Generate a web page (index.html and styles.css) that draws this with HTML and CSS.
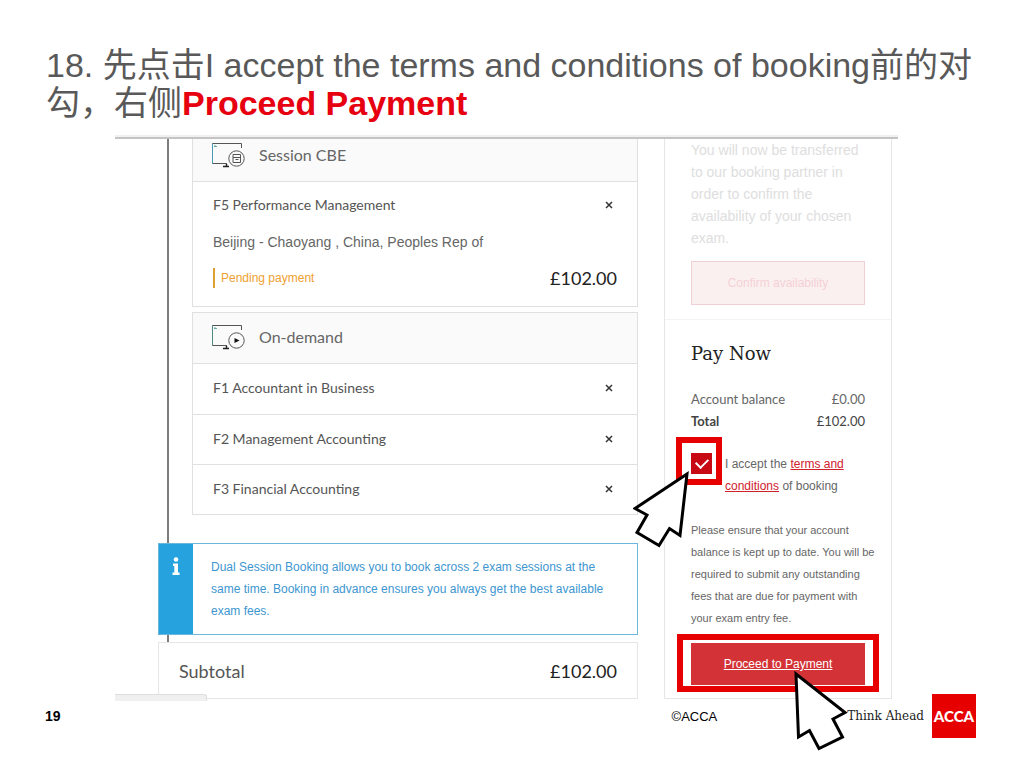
FILE: index.html
```html
<!DOCTYPE html>
<html lang="zh">
<head>
<meta charset="utf-8">
<title>Proceed Payment</title>
<meta name="viewport" content="width=device-width, initial-scale=1">
<link rel="stylesheet" href="styles.css">
</head>
<body>
<article class="slide">
  <h1 class="slide-title">18. 先点击I accept the terms and conditions of booking前的对勾，右侧<strong>Proceed Payment</strong></h1>

  <div class="capture">
    <main class="booking">
      <section class="card card-cut">
        <header class="card-head">
          <svg class="card-icon" viewBox="0 0 34 26" fill="none" stroke="#555" stroke-width="1" aria-hidden="true">
            <path d="M30.5 6V1.500H1.500V21.500H16"/>
            <path d="M1.500 1.500V21.500" stroke="#4a9bb5"/>
            <path d="M3 4.500H6M4 3V5" stroke="#6aa"/>
            <path d="M15.500 22V24M12 24.500H18" stroke="#222" stroke-width="1.500"/>
            <circle cx="25.500" cy="16.500" r="7.700" fill="#fafafa"/>
            <path d="M22 12.500H29.500V20.500H22ZM22 15.500H29.500M24.500 17.500H27.500"/>
          </svg>
          <h2 class="card-title">Session CBE</h2>
        </header>
        <div class="exam">
          <div class="exam-row">
            <h3 class="exam-name">F5 Performance Management</h3>
            <button class="remove" type="button" aria-label="Remove F5 Performance Management"><svg viewBox="0 0 8 8" aria-hidden="true"><path d="M1 1L7 7M7 1L1 7"/></svg></button>
          </div>
          <p class="exam-place">Beijing - Chaoyang , China, Peoples Rep of</p>
          <div class="exam-row exam-pay">
            <span class="status">Pending payment</span>
            <span class="price">£102.00</span>
          </div>
        </div>
      </section>

      <section class="card">
        <header class="card-head">
          <svg class="card-icon" viewBox="0 0 34 26" fill="none" stroke="#555" stroke-width="1" aria-hidden="true">
            <path d="M30.500 6V1.500H1.500V21.500H16"/>
            <path d="M1.500 1.500V21.500" stroke="#4f8a80"/>
            <path d="M3 4.500H6M4 3V5" stroke="#6aa"/>
            <path d="M15.500 22V24M12 24.500H18" stroke="#222" stroke-width="1.500"/>
            <circle cx="25.500" cy="16.500" r="7.700" fill="#fafafa"/>
            <path d="M23.500 14L28.500 16.500L23.500 19Z" fill="#111" stroke="none"/>
          </svg>
          <h2 class="card-title">On-demand</h2>
        </header>
        <ul class="exam-list">
          <li class="exam-line"><span class="exam-name">F1 Accountant in Business</span><button class="remove" type="button" aria-label="Remove F1 Accountant in Business"><svg viewBox="0 0 8 8" aria-hidden="true"><path d="M1 1L7 7M7 1L1 7"/></svg></button></li>
          <li class="exam-line"><span class="exam-name">F2 Management Accounting</span><button class="remove" type="button" aria-label="Remove F2 Management Accounting"><svg viewBox="0 0 8 8" aria-hidden="true"><path d="M1 1L7 7M7 1L1 7"/></svg></button></li>
          <li class="exam-line"><span class="exam-name">F3 Financial Accounting</span><button class="remove" type="button" aria-label="Remove F3 Financial Accounting"><svg viewBox="0 0 8 8" aria-hidden="true"><path d="M1 1L7 7M7 1L1 7"/></svg></button></li>
        </ul>
      </section>

      <aside class="notice">
        <span class="notice-badge">
          <svg class="notice-icon" viewBox="0 0 8 18" fill="#fff" aria-hidden="true"><circle cx="4" cy="2.500" r="2.300"/><path d="M1 6.500H6V15.500H7.500V18H0.500V15.500H2.300V9H1Z"/></svg>
        </span>
        <p class="notice-text">Dual Session Booking allows you to book across 2 exam sessions at the same time. Booking in advance ensures you always get the best available exam fees.</p>
      </aside>

      <div class="subtotal">
        <span class="subtotal-label">Subtotal</span>
        <span class="price">£102.00</span>
      </div>
    </main>

    <aside class="checkout">
      <section class="availability">
        <p class="availability-text">You will now be transferred to our booking partner in order to confirm the availability of your chosen exam.</p>
        <button class="confirm" type="button" disabled>Confirm availability</button>
      </section>
      <section class="pay">
        <h2 class="pay-title">Pay Now</h2>
        <dl class="totals">
          <div class="total-row"><dt>Account balance</dt><dd>£0.00</dd></div>
          <div class="total-row total-due"><dt>Total</dt><dd>£102.00</dd></div>
        </dl>
        <div class="accept">
          <input class="accept-box" id="accept" type="checkbox" checked>
          <label class="accept-label" for="accept">I accept the <a href="#terms">terms and conditions</a> of booking</label>
          <span class="mark mark-accept"></span>
          <svg class="cursor cursor-accept" viewBox="0 0 58 78" aria-hidden="true"><path d="M54 4L2 38.500L14 45L4 62.500L26 75.500L36.500 58.500L47 65.500Z"/></svg>
        </div>
        <p class="pay-note">Please ensure that your account balance is kept up to date. You will be required to submit any outstanding fees that are due for payment with your exam entry fee.</p>
        <div class="proceed-wrap">
          <a class="proceed" href="#payment">Proceed to Payment</a>
          <span class="mark mark-proceed"></span>
          <svg class="cursor cursor-proceed" viewBox="0 0 56 82" aria-hidden="true"><path d="M3 4L52 42.500L40 49L49.500 67L26 78.500L16.500 60.500L5.500 67Z"/></svg>
        </div>
      </section>
    </aside>
    <span class="status-tab"></span>
  </div>

  <footer class="slide-foot">
    <span class="page-number">19</span>
    <span class="copyright">©ACCA</span>
    <span class="tagline">Think Ahead</span>
    <span class="logo">ACCA</span>
  </footer>
</article>
</body>
</html>
```
FILE: styles.css
```css
* { box-sizing: border-box; }

body {
  margin: 0;
  background: #fff;
  color: #666;
  font-family: "Liberation Sans", Arial, "Noto Sans CJK SC", sans-serif;
}

h1, h2, h3, p, ul, dl, dd { margin: 0; padding: 0; font-weight: 400; }
ul { list-style: none; }

.slide { padding: 46px 0 28px; }

.slide-title {
  padding: 0 40px 0 46px;
  margin-bottom: 13px;
  color: #595959;
  font-size: 34px;
  line-height: 38px;
}
.slide-title strong { color: #e60010; font-weight: 700; }

/* Booking page */
.capture {
  position: relative;
  display: grid;
  grid-template-columns: minmax(0, 1fr) 228px;
  column-gap: 26px;
  margin: 0 117px 0 115px;
  padding: 0 6px 2px 0;
  border-top: 4px solid #f0f0f0;
}
.capture::before {
  content: "";
  position: absolute;
  top: -2px;
  left: 0;
  right: 0;
  height: 2px;
  background: #c4c4c4;
}

.booking { position: relative; padding-left: 43px; }
.booking::before {
  content: "";
  position: absolute;
  top: 0;
  bottom: 57px;
  left: 52px;
  width: 2px;
  background: #7c7c7c;
}

.card {
  margin: 0 0 5px 34px;
  border: 1px solid #e0e0e0;
}
.card-cut { border-top: 0; }
.card-head {
  display: flex;
  align-items: center;
  gap: 14px;
  height: 51px;
  padding: 0 0 2px 18px;
  background: #fafafa;
  border-bottom: 1px solid #e0e0e0;
}
.card-cut .card-head { height: 43px; padding-bottom: 10px; }
.card-icon { width: 34px; height: 26px; }
.card-title { font-family: Lato, sans-serif; font-size: 16px; line-height: 22px; }

.exam { padding: 12px 20px 15px; }
.exam-row { display: flex; align-items: center; justify-content: space-between; }
.exam-pay { align-items: flex-start; }
.exam-name { color: #555; font-family: Lato, sans-serif; font-size: 14px; line-height: 22px; }
.exam-place { margin: 15px 0 12px; font-size: 14px; line-height: 22px; }
.status {
  margin-top: 3px;
  padding-left: 6px;
  border-left: 2px solid #e0a030;
  color: #f0a030;
  font-size: 12px;
  line-height: 20px;
}
.price { color: #222; font-family: Lato, "Noto Sans", sans-serif; font-size: 18px; line-height: 26px; }

.remove {
  display: flex;
  padding: 4px;
  border: 0;
  background: none;
}
.remove svg { width: 8px; height: 8px; fill: none; stroke: #333; stroke-width: 1.5; }

.exam-line {
  display: flex;
  align-items: center;
  justify-content: space-between;
  height: 50px;
  padding: 0 20px 2px;
}
.exam-line + .exam-line { border-top: 1px solid #e0e0e0; }

.notice {
  position: relative;
  display: flex;
  margin-top: 28px;
  border: 1px solid #6ab6dd;
  background: #fff;
}
.notice-badge {
  display: flex;
  justify-content: center;
  flex: 0 0 34px;
  padding-top: 13px;
  background: #26a3df;
}
.notice-icon { width: 8px; height: 18px; }
.notice-text { padding: 12px 18px; color: #3d96d0; font-size: 12px; line-height: 22px; }

.subtotal {
  display: flex;
  align-items: center;
  justify-content: space-between;
  height: 57px;
  margin-top: 7px;
  padding: 0 20px;
  border: 1px solid #e6e6e6;
}
.subtotal-label { color: #555; font-family: Lato, sans-serif; font-size: 18px; }

/* Payment panel */
.checkout { border: 1px solid #e6e6e6; border-top: 0; }
.availability { padding: 0 26px 14px; border-bottom: 1px solid #f4f4f4; }
.availability-text { color: #dedede; font-size: 14px; line-height: 22px; }
.confirm {
  display: block;
  width: 100%;
  height: 44px;
  margin-top: 12px;
  border: 1px solid #f0d0d4;
  background: #faf0f0;
  color: #f5d0d6;
  font: 12px "Liberation Sans", Arial, sans-serif;
}
.pay { padding: 20px 26px 13px; }
.pay-title { color: #222; font-family: "DejaVu Serif", serif; font-size: 18px; line-height: 28px; }
.totals { margin-top: 20px; font-family: Lato, sans-serif; font-size: 13px; line-height: 22px; }
.total-row { display: flex; justify-content: space-between; }
.total-due { color: #444; font-weight: 700; }

.accept {
  position: relative;
  display: flex;
  align-items: flex-start;
  gap: 13px;
  margin-top: 21px;
}
.accept-box {
  appearance: none;
  display: grid;
  place-items: center;
  flex: 0 0 21px;
  height: 21px;
  margin: 0;
  background: #c80a14;
}
.accept-box:checked::before {
  content: "";
  width: 10px;
  height: 6px;
  margin-bottom: 3px;
  border: solid #fff;
  border-width: 0 0 2px 2px;
  transform: rotate(-45deg);
}
.accept-label { font-size: 12px; line-height: 22px; }
.accept-label a { color: #d0202c; }

.pay-note { margin: 22px -12px 0 0; font-size: 11px; line-height: 22px; }

.proceed-wrap { position: relative; margin-top: 14px; }
.proceed {
  display: block;
  background: #d33236;
  color: #fff;
  font-size: 12px;
  line-height: 42px;
  text-align: center;
}

/* Annotations over the page */
.mark { position: absolute; border: 6px solid #e60000; pointer-events: none; }
.mark-accept { top: -16px; left: -15px; width: 46px; height: 48px; }
.mark-proceed { inset: -9px -14px -7px; }
.cursor {
  position: absolute;
  z-index: 1;
  fill: #fff;
  stroke: #000;
  stroke-width: 3;
  pointer-events: none;
}
.cursor-accept { top: 17px; left: -58px; width: 58px; height: 78px; }
.cursor-proceed { top: 27px; left: 102px; width: 56px; height: 82px; }

.status-tab {
  position: absolute;
  bottom: 0;
  left: 0;
  width: 92px;
  height: 7px;
  border: 1px solid #dedede;
  border-width: 1px 1px 0 0;
  border-radius: 0 3px 0 0;
  background: #f0f0f0;
}

.slide-foot {
  display: flex;
  align-items: center;
  margin-top: -7px;
  padding: 0 39px 0 45px;
}
.page-number { margin-right: auto; color: #000; font-size: 14px; font-weight: 700; }
.copyright { margin-right: 130px; color: #000; font-size: 13px; }
.tagline { margin-right: 8px; color: #222; font-family: "DejaVu Serif", serif; font-size: 12px; }
.logo {
  width: 44px;
  background: #e60000;
  color: #fff;
  font-family: Lato, sans-serif;
  font-size: 15px;
  font-weight: 900;
  line-height: 44px;
  text-align: center;
}
```
